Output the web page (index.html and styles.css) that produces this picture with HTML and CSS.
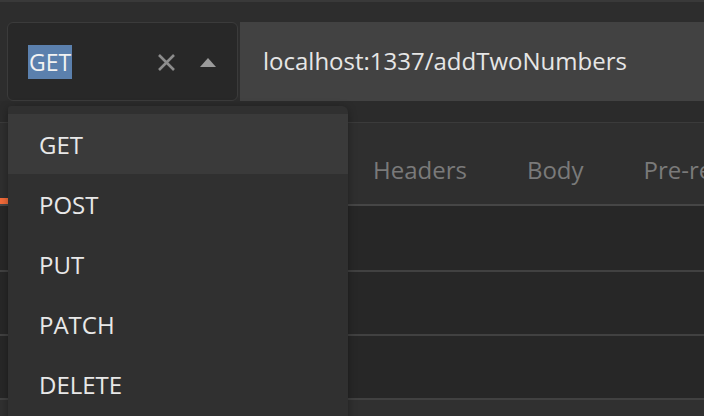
FILE: index.html
```html
<!DOCTYPE html>
<html>
<head>
<meta charset="utf-8">
<link rel="stylesheet" href="styles.css">
</head>
<body>
<div class="app">
  <div class="topline"></div>
  <div class="request-row">
    <div class="method-select">
      <span class="method-value">GET</span>
      <span class="controls">
        <svg class="clear" width="19" height="19" viewBox="0 0 19 19"><path d="M2 2 L17 17 M17 2 L2 17" stroke="#8c8c8c" stroke-width="2.6" fill="none"/></svg>
        <svg class="caret" width="16" height="9" viewBox="0 0 16 9"><path d="M8 0 L16 9 L0 9 Z" fill="#9b9b9b"/></svg>
      </span>
    </div>
    <div class="url">localhost:1337/addTwoNumbers</div>
  </div>
  <div class="gap"></div>
  <div class="tabs">
    <span class="tab-indicator"></span>
    <span class="tab tab-headers">Headers</span>
    <span class="tab tab-body">Body</span>
    <span class="tab tab-pre">Pre-re</span>
  </div>
  <div class="rows">
    <div class="row"></div>
    <div class="row"></div>
    <div class="row"></div>
  </div>
  <div class="footer"></div>

  <ul class="menu">
    <li class="item active">GET</li>
    <li class="item">POST</li>
    <li class="item">PUT</li>
    <li class="item">PATCH</li>
    <li class="item">DELETE</li>
  </ul>
</div>
</body>
</html>
```
FILE: styles.css
```css
* { box-sizing: border-box; }
html, body {
  margin: 0;
  padding: 0;
  width: 704px;
  height: 416px;
  overflow: hidden;
  background: #2d2d2d;
  font-family: "Open Sans", "Noto Sans", sans-serif;
}
.app {
  position: relative;
  width: 704px;
  height: 416px;
  overflow: hidden;
}
.topline {
  height: 2px;
  background: #393939;
  margin-bottom: 20px;
}
.request-row {
  display: flex;
  height: 79px;
  padding-left: 7px;
}
.method-select {
  width: 231px;
  margin-right: 2px;
  background: #282828;
  border: 1px solid #3b3b3b;
  border-radius: 6px;
  display: flex;
  align-items: center;
  padding-left: 20px;
  padding-right: 21px;
}
.method-value {
  background: #5b80ad;
  color: #f2f2f2;
  font-size: 23px;
  line-height: 34px;
  height: 34px;
  padding: 0 1px;
}
.controls {
  margin-left: auto;
  display: flex;
  align-items: center;
  gap: 24px;
}
.clear { margin-top: 1px; }
.caret { margin-top: 2px; }
.url {
  flex: 1;
  background: #424242;
  color: #e6e6e6;
  font-size: 24px;
  display: flex;
  align-items: center;
  padding-left: 23px;
  padding-bottom: 2px;
}
.gap {
  height: 21px;
  background: #2b2b2b;
}
.tabs {
  height: 84px;
  background: #2f2f2f;
  border-top: 1px solid #3b3b3b;
  border-bottom: 2px solid #464646;
  display: flex;
  align-items: center;
  padding-top: 12px;
  position: relative;
  white-space: nowrap;
  overflow: hidden;
}
.tab-indicator {
  position: absolute;
  left: 0;
  bottom: 0;
  width: 120px;
  height: 6px;
  background: #f26b3a;
}
.tab {
  color: #7a7a7a;
  font-size: 24px;
}
.tab-headers { margin-left: 373px; }
.tab-body { margin-left: 60px; }
.tab-pre { margin-left: 60px; }
.rows {
  background: #272727;
}
.row {
  height: 64px;
  border-bottom: 2px solid #414141;
}
.row:first-child { height: 66px; }
.footer {
  height: 30px;
  background: #303030;
}
.menu {
  position: absolute;
  left: 8px;
  top: 106px;
  width: 340px;
  height: 320px;
  margin: 0;
  padding: 8px 0 0;
  list-style: none;
  background: #303030;
  border-radius: 3px 6px 0 0;
  box-shadow: 0 2px 8px rgba(0,0,0,0.35);
}
.item {
  height: 60px;
  line-height: 60px;
  padding-left: 31px;
  padding-top: 1px;
  color: #e8e8e8;
  font-size: 24px;
}
.item.active {
  background: #3a3a3a;
}
```
